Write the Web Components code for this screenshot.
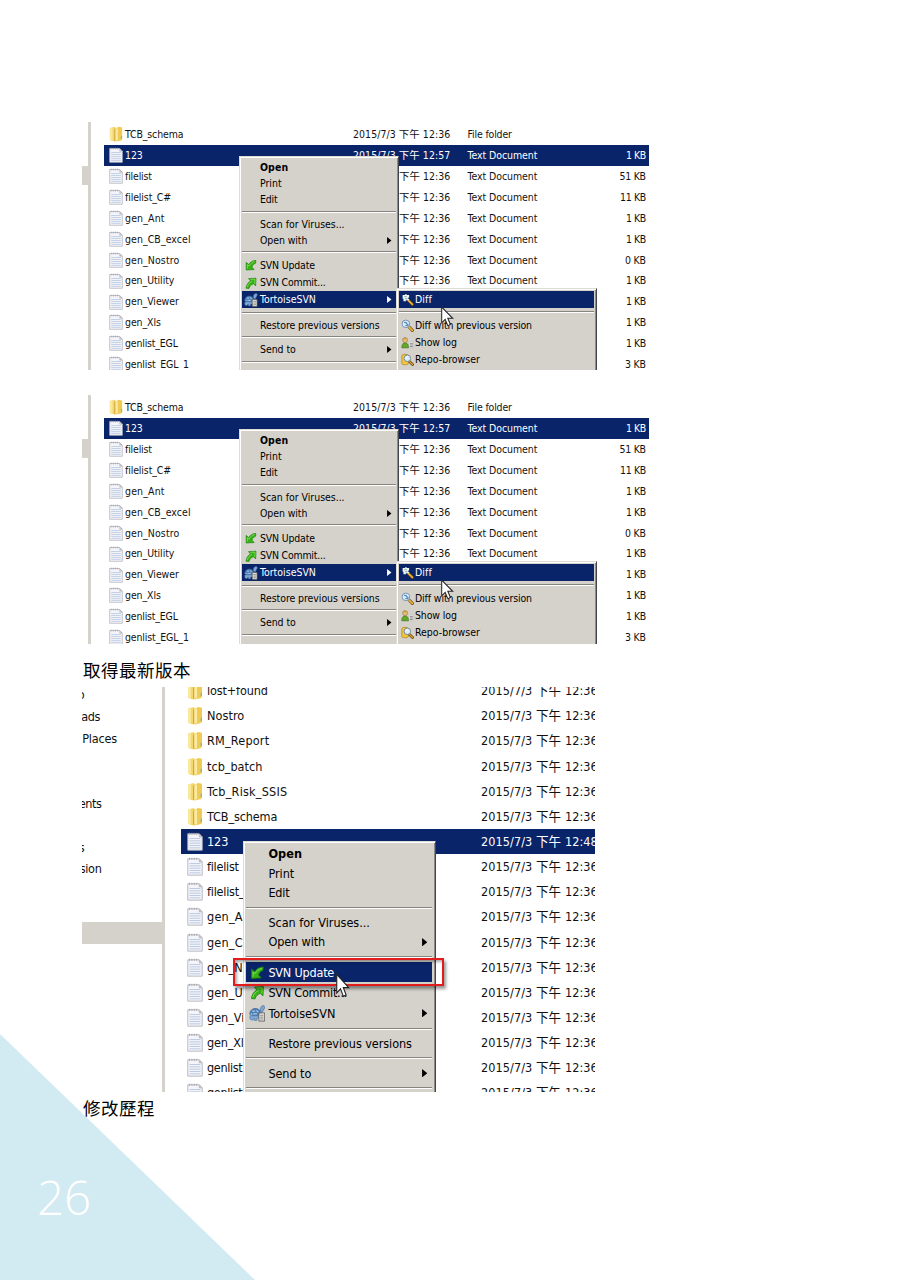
<!DOCTYPE html>
<html lang="zh-Hant">
<head>
<meta charset="utf-8">
<title>SVN 操作手冊</title>
<style>
html,body{margin:0;padding:0;background:#fff}
body{width:906px;height:1280px;overflow:hidden}
</style>
</head>
<body>
<doc-page></doc-page>
<script>
const FONT = '"DejaVu Sans Condensed","DejaVu Sans","Noto Sans CJK TC",sans-serif';

const ICONS = {
  folder: `<svg viewBox="0 0 16 17" preserveAspectRatio="none"><path d="M1 2.2 6.500.8 8 2v13.600l-2 1L1 15z" fill="#f3d66e"/><path d="M1 2.200 4 1.500v14.400L1 15z" fill="#f9e79a"/><path d="M7 3l4-2.200 4 .8v12.500l-1 1.200L8 16.600 6 15.800z" fill="#efcb55"/><path d="M7.200 3.200 10 2v13l-2.600 1.400z" fill="#fbeaa4"/><path d="M6.600 3v13" stroke="#c79d32" stroke-width=".8"/><path d="M14.300 10.500v3" stroke="#7fb9a5" stroke-width="1.400"/></svg>`,
  doc: `<svg viewBox="0 0 16 18" preserveAspectRatio="none"><path d="M.8 1.700h11.400l3 3v12.500H.8z" fill="#f4f5fa" stroke="#b4b5bd" stroke-width=".9"/><path d="M12.200 1.700v3h3z" fill="#c9cad1" stroke="#aaa" stroke-width=".5"/><path d="M2.500.7v2M4.900.7v2M7.300.7v2M9.700.7v2" stroke="#9c9ca4" stroke-width=".8"/><path d="M2.500 6.200h11M2.500 8.400h11M2.500 10.600h11M2.500 12.800h11M2.500 15h11" stroke="#b6c6df" stroke-width=".9"/></svg>`,
  update: `<svg viewBox="0 0 16 16"><path d="M2.500 13.700V5L5.300 7.400C7.400 4.500 9.800 3 13.500 2.800L13.300 6C11.200 6.700 9.900 7.900 9 10.400L11.600 13.200z" fill="#35b315" stroke="#1c820f" stroke-width=".8"/><path d="M3.800 12.200 4 7.600l1.800 1.600c1.600-2.800 3.400-4.400 6.200-5" fill="none" stroke="#8fe561" stroke-width=".8"/></svg>`,
  commit: `<svg viewBox="0 0 16 16"><path d="M5.200 3 13.700 2.500 13.300 11.300 10.900 8.900C8.500 9.500 6.600 11.200 5.700 14.200L2.300 13.900C2.700 10.200 4.600 7.200 7.600 5.600z" fill="#35b315" stroke="#1c820f" stroke-width=".8"/><path d="M7.200 3.900 12.600 3.600 12.300 9M3.600 12.800C4.300 9.700 6 7.600 9.200 6.200" fill="none" stroke="#8fe561" stroke-width=".8"/></svg>`,
  tortoise: `<svg viewBox="0 0 18 18"><path d="M12 6c0-3 1-5 3-5.400 2-.2 2.600 1.800 1.500 3.200L14 8z" fill="#7ea5cf" stroke="#4b719f" stroke-width=".7"/><path d="M.8 10C1 5.500 4 3.500 7.500 3.800c3.500.3 5.400 3 5.500 7.200l-5 2.500z" fill="#4d7fb8" stroke="#315a8c" stroke-width=".7"/><path d="M3.500 6.500h3M8 5.500l2 2.500M4.500 9.500h4M2 9l1.500 2" stroke="#a9cae8" stroke-width="1.200"/><path d="M1 11.500h10V14H8.500v2.500h-3V14L3.500 16.500 1 15z" fill="#81a8d3" stroke="#426b9e" stroke-width=".6"/><path d="M10.600 8.500h6.200v8.700h-6.200z" fill="#ece9e1" stroke="#555" stroke-width=".9"/><path d="M12 11h3.500M12 13h3.500M12 15h3.500" stroke="#666" stroke-width=".8"/></svg>`,
  find: `<svg viewBox="0 0 16 16"><path d="m9 9 5 5" stroke="#6f4b0c" stroke-width="3.600" stroke-linecap="round"/><path d="m9 9 5 5" stroke="#eeb53b" stroke-width="2" stroke-linecap="round"/><circle cx="6" cy="6" r="4.700" fill="#d9edfb" stroke="#7893b1" stroke-width="1.200"/><path d="M3.600 4.200h3v2h2v2H5.200" fill="none" stroke="#3c6ea8" stroke-width="1.100"/></svg>`,
  findsel: `<svg viewBox="0 0 16 16"><path d="m9 9 5 5" stroke="#5b400f" stroke-width="3.600" stroke-linecap="round"/><path d="m9 9 5 5" stroke="#eeb53b" stroke-width="2" stroke-linecap="round"/><path d="M2 2.500h3v-1h2v1h3v3H9v2h1V9H6v1H3V7H2z" fill="#eaf6ee"/><path d="M4 4.500h3M5 7h3" stroke="#6d9cae" stroke-width="1"/></svg>`,
  log: `<svg viewBox="0 0 16 16"><path d="M1 14.500C1 10 2.500 8.500 5 8.500s4.300 1.500 4.300 6z" fill="#62a928" stroke="#396f12" stroke-width=".8"/><circle cx="5" cy="5" r="3" fill="#ecc27c" stroke="#8f6420" stroke-width=".7"/><path d="M2 4.600C2.200 1.500 7.500 1.300 8 4.400 6 3.600 4 3.800 2 4.600" fill="#c79b3c"/><path d="M10 7h5.200v7.500H10z" fill="#f6f6f6" stroke="#aaa" stroke-width=".5"/><path d="M11 9h3.500M11 11h3.500M11 13h3.500" stroke="#555" stroke-width=".9"/></svg>`,
  repo: `<svg viewBox="0 0 16 16"><path d="M1 3.500C1 1 9 1 9 3.500V13c0 2-8 2-8 0z" fill="#f2c63c" stroke="#a77d15" stroke-width=".8"/><path d="m10 10 4.200 4.200" stroke="#5d3f0a" stroke-width="3.400" stroke-linecap="round"/><path d="m10 10 4.200 4.200" stroke="#e6a62c" stroke-width="1.600" stroke-linecap="round"/><circle cx="7.800" cy="6.500" r="4" fill="#dceefa" stroke="#6f7f90" stroke-width="1.100"/><path d="M5.800 6.500c.4-1.300 1.200-1.800 2.400-1.800" fill="none" stroke="#fff" stroke-width="1"/></svg>`,
  arrow: `<svg viewBox="0 0 5 8"><path d="M0 0 5 4 0 8z" fill="currentColor"/></svg>`,
  cursor: `<svg viewBox="0 0 13 20" preserveAspectRatio="none"><path d="M.7 1v15l3.500-3.300 2.600 6 2.600-1.100-2.600-5.900h4.900z" fill="#fff" stroke="#222" stroke-width="1"/></svg>`
};

class GlyphIcon extends HTMLElement {
  connectedCallback() {
    const r = this.attachShadow({mode: 'open'});
    r.innerHTML = `<style>:host{display:block;flex:none}svg{display:block;width:100%;height:100%}</style>${ICONS[this.getAttribute('name')]}`;
  }
}

/* One line of text whose tracking is adjusted to occupy the width "w". */
class UiText extends HTMLElement {
  connectedCallback() {
    const r = this.attachShadow({mode: 'open'});
    r.innerHTML = `<style>:host{display:block;flex:none;white-space:pre}span{display:inline-block}</style><span></span>`;
    const s = r.querySelector('span');
    s.textContent = this.getAttribute('text');
    const w = parseFloat(this.getAttribute('w'));
    if (w) {
      const n = s.textContent.length;
      s.style.letterSpacing = ((w + 0.3 - s.getBoundingClientRect().width) / n) + 'px';
    }
  }
}

class FileRow extends HTMLElement {
  connectedCallback() {
    const r = this.attachShadow({mode: 'open'}), a = n => this.getAttribute(n) || '';
    const t = (n, w) => a(n) ? `<ui-text class="${n}" text="${a(n)}" w="${w}"></ui-text>` : '';
    r.innerHTML = `<style>
      :host{display:grid;grid-template-columns:var(--cols);align-items:center;height:var(--row);box-sizing:border-box;line-height:1.2}
      :host([selected]){color:#fff;background:#0a246a}
      :host([short]) .date{margin-left:46px}
      glyph-icon{width:var(--iw);height:var(--ih);margin-left:var(--il)}
      .size-cell{grid-column:5;justify-self:end}
    </style><glyph-icon name="${a('icon')}"></glyph-icon>${t('name', a('nw'))}${t('date', a('dw'))}${t('type', a('tw'))}<div class="size-cell">${t('size', a('sw'))}</div>`;
  }
}

class MenuItem extends HTMLElement {
  connectedCallback() {
    const r = this.attachShadow({mode: 'open'}), a = n => this.getAttribute(n);
    r.innerHTML = `<style>
      :host{display:flex;align-items:center;height:calc(16.2px*var(--k));line-height:1.2}
      :host([icon]){height:calc(17.2px*var(--k))}
      :host([selected]){background:#0a246a;color:#fff}
      :host([bold]){font-weight:bold}
      .ic{width:var(--gutter);flex:none;display:flex}
      glyph-icon.i{width:calc(var(--is,14px)*var(--k));height:calc(var(--is,14px)*var(--k));margin-left:calc(1.800px*var(--k))}
      .a{width:calc(4.5px*var(--k));height:calc(7px*var(--k));margin-left:auto;margin-right:calc(4px*var(--k))}
    </style><div class="ic">${a('icon') ? `<glyph-icon class="i" name="${a('icon')}"></glyph-icon>` : ''}</div><ui-text text="${a('text')}" w="${a('w')}"></ui-text>${this.hasAttribute('sub') ? '<glyph-icon class="a" name="arrow"></glyph-icon>' : ''}`;
  }
}

class MenuLine extends HTMLElement {
  connectedCallback() {
    this.attachShadow({mode: 'open'}).innerHTML = `<style>:host{display:flex;align-items:center;height:calc(8.5px*var(--k))}i{flex:1;height:1px;background:#86847f;border-bottom:1px solid #fff}</style><i></i>`;
  }
}

class PopupMenu extends HTMLElement {
  connectedCallback() {
    this.attachShadow({mode: 'open'}).innerHTML = `<style>
      :host{display:block;box-sizing:border-box;background:#d5d2cc;color:#000;
        border:1px solid #dedcd7;border-right:1px solid #42454b;
        box-shadow:inset 1px 1px 0 #fff,inset -1px 0 0 #8d8c88;
        padding:calc(1.800px*var(--k)) calc(2.500px*var(--k)) 0 calc(2px*var(--k))}
    </style><slot></slot>`;
  }
}

const item = (text, w, k, extra = '') => `<menu-item text="${text}" w="${w * k}" ${extra}></menu-item>`;
const menuItems = (k, sel) => [
  item('Open', 28, k, 'bold'), item('Print', 21.3, k), item('Edit', 17.3, k), '<menu-line></menu-line>',
  item('Scan for Viruses...', 84.3, k), item('Open with', 47, k, 'sub'), '<menu-line></menu-line>',
  item('SVN Update', 54.5, k, 'icon="update"' + (sel === 'update' ? ' selected' : '')),
  item('SVN Commit...', 65.3, k, 'icon="commit"'),
  item('TortoiseSVN', 55.6, k, 'icon="tortoise" sub' + (sel === 'tortoise' ? ' selected' : '')),
  '<menu-line></menu-line>', item('Restore previous versions', 119.3, k), '<menu-line></menu-line>',
  item('Send to', 35.5, k, 'sub'), '<menu-line></menu-line>'
].join('');

class DiffShot extends HTMLElement {
  connectedCallback() {
    const files = [['123',17.5,'1 KB',19.5],['filelist',26.5,'51 KB',26],['filelist_C#',45.7,'11 KB',25.5],['gen_Ant',39.3,'1 KB',19.5],
      ['gen_CB_excel',65.3,'1 KB',19.5],['gen_Nostro',54,'0 KB',20.5],['gen_Utility',49,'1 KB',19.5],['gen_Viewer',53.5,'1 KB',19.5],
      ['gen_Xls',35.5,'1 KB',19.5],['genlist_EGL',52.5,'1 KB',19.5],['genlist_EGL_1',63.5,'3 KB',20.5]];
    const detail = i => i > 6 ? '' : `${i ? 'short date="下午 12:36" dw="51"' : 'date="2015/7/3 下午 12:57" dw="97"'} type="Text Document" tw="69.500"`;
    this.attachShadow({mode: 'open'}).innerHTML = `<style>
      :host{display:grid;grid-template-columns:6px 2.500px 13.500px 545px;position:relative;width:568px;height:248px;overflow:hidden;
        font:10.45px ${FONT};color:#111;--k:1;
        --row:20.9px;--cols:21px 228px 114.500px 1fr 60px;--iw:14px;--ih:16px;--il:4.500px}
      .band{height:19px;margin-top:44px;background:#d5d2cc}
      .split{background:#d5d2cc}
      .files{grid-column:4;padding-top:2px}
      file-row{padding-right:3.200px}
      .main{position:absolute;left:157px;top:34px;width:160px;height:260px;--gutter:18px}
      .sub{position:absolute;left:314px;top:166px;width:201px;height:110px;--gutter:16px;--is:13px}
      .cursor{position:absolute;left:359px;top:184px;width:13px;height:21px}
    </style>
    <div class="band"></div><div class="split"></div>
    <div class="files">
      <file-row icon="folder" name="TCB_schema" nw="58" date="2015/7/3 下午 12:36" dw="97" type="File folder" tw="44"></file-row>
      ${files.map((f, i) => `<file-row icon="doc" ${i ? '' : 'selected'} name="${f[0]}" nw="${f[1]}" ${detail(i)} size="${f[2]}" sw="${f[3]}"></file-row>`).join('')}
    </div>
    <popup-menu class="main">${menuItems(1, 'tortoise')}</popup-menu>
    <popup-menu class="sub">${item('Diff', 16.5, 1, 'icon="findsel" selected')}<menu-line></menu-line>
      ${item('Diff with previous version', 116.5, 1, 'icon="find"')}${item('Show log', 41.5, 1, 'icon="log"')}${item('Repo-browser', 64.5, 1, 'icon="repo"')}</popup-menu>
    <glyph-icon class="cursor" name="cursor"></glyph-icon>`;
  }
}

class UpdateShot extends HTMLElement {
  connectedCallback() {
    const k = 1.2;
    const files = [['lost+found',60.5,1],['Nostro',37,1],['RM_Report',62,1],['tcb_batch',55,1],['Tcb_Risk_SSIS',80,1],['TCB_schema',70,1],
      ['123',21],['filelist',31.5],['filelist_',37],['gen_A',35.5],['gen_C',35.5],['gen_N',35.5],['gen_U',35.5],
      ['gen_Vi',37],['gen_Xl',36.5],['genlist',35],['genlist',35]];
    const side = [['o',3],['ads',18],['Places',35],['',0],['',0],['ents',19.5],['',0],['s',2],['sion',19.5]];
    const sw = {o: 7, ads: 18.5, Places: 34.5, ents: 22.5, s: 5, sion: 21.5};
    this.attachShadow({mode: 'open'}).innerHTML = `<style>
      :host{display:grid;grid-template-columns:80px 3px 16px 414px;position:relative;width:513px;height:405px;overflow:hidden;
        font:12.550px ${FONT};color:#111;--k:1.200;
        --row:25.150px;--cols:26px 274px 120px 0 0;--iw:16px;--ih:19px;--il:6px}
      .side{display:flex;flex-direction:column;margin-top:-3px;overflow:hidden}
      .side div{height:21.750px;flex:none;display:flex;align-items:center;justify-content:flex-end;line-height:1.2}
      .side .band{margin-top:42.500px;width:80px;background:#d5d2cc}
      .split{background:#d5d2cc}
      .files{grid-column:4;margin-top:-8.900px}
      .main{position:absolute;left:161px;top:154px;width:193px;height:300px;--gutter:22px}
      .mark{position:absolute;left:150.500px;top:271px;width:207px;height:23.500px;border:2.500px solid #e11c1c;box-shadow:2px 3px 3px #0006,inset 2px 2px 3px #0005}
      .cursor{position:absolute;left:254px;top:286px;width:14px;height:25px}
    </style>
    <div class="side">${side.map(s => `<div style="width:${s[1]}px">${s[0] ? `<ui-text text="${s[0]}" w="${sw[s[0]]}"></ui-text>` : ''}</div>`).join('')}<div class="band"></div></div>
    <div class="split"></div>
    <div class="files">${files.map(f => `<file-row icon="${f[2] ? 'folder' : 'doc'}" ${f[0] === '123' ? 'selected' : ''} name="${f[0]}" nw="${f[1]}" date="2015/7/3 下午 12:${f[0] === '123' ? 48 : 36}" dw="116.500"></file-row>`).join('')}</div>
    <popup-menu class="main">${menuItems(k, 'update')}</popup-menu>
    <div class="mark"></div>
    <glyph-icon class="cursor" name="cursor"></glyph-icon>`;
  }
}

class PageCorner extends HTMLElement {
  connectedCallback() {
    this.attachShadow({mode: 'open'}).innerHTML = `<style>
      :host{display:flex;align-items:flex-end;box-sizing:border-box;width:255px;height:246px;padding:0 0 50px 37px;background:#d2eaf1;clip-path:polygon(0 0,100% 100%,0 100%);
        font:300 47.500px/66px "Open Sans",sans-serif;color:#fff}
    </style><slot></slot>`;
  }
}

class DocPage extends HTMLElement {
  connectedCallback() {
    this.attachShadow({mode: 'open'}).innerHTML = `<style>
      :host{display:flex;flex-direction:column;align-items:flex-start;position:relative;box-sizing:border-box;width:906px;height:1280px;padding:122px 0 0 82px;background:#fff;overflow:hidden}
      diff-shot + diff-shot{margin-top:25px;height:249px}
      p{margin:0;height:43px;padding-left:1px;font:400 17.500px/51px "Noto Sans CJK TC",sans-serif;letter-spacing:.5px;color:#000;position:relative}
      p.last{height:34px;line-height:32px}
      page-corner{position:absolute;left:0;bottom:0}
    </style>
    <page-corner>26</page-corner>
    <diff-shot></diff-shot>
    <diff-shot></diff-shot>
    <p>取得最新版本</p>
    <update-shot></update-shot>
    <p class="last">修改歷程</p>`;
  }
}

[['glyph-icon', GlyphIcon], ['ui-text', UiText], ['file-row', FileRow], ['menu-item', MenuItem], ['menu-line', MenuLine],
 ['popup-menu', PopupMenu], ['diff-shot', DiffShot], ['update-shot', UpdateShot], ['page-corner', PageCorner], ['doc-page', DocPage]]
  .forEach(([n, c]) => customElements.define(n, c));
</script>
</body>
</html>
